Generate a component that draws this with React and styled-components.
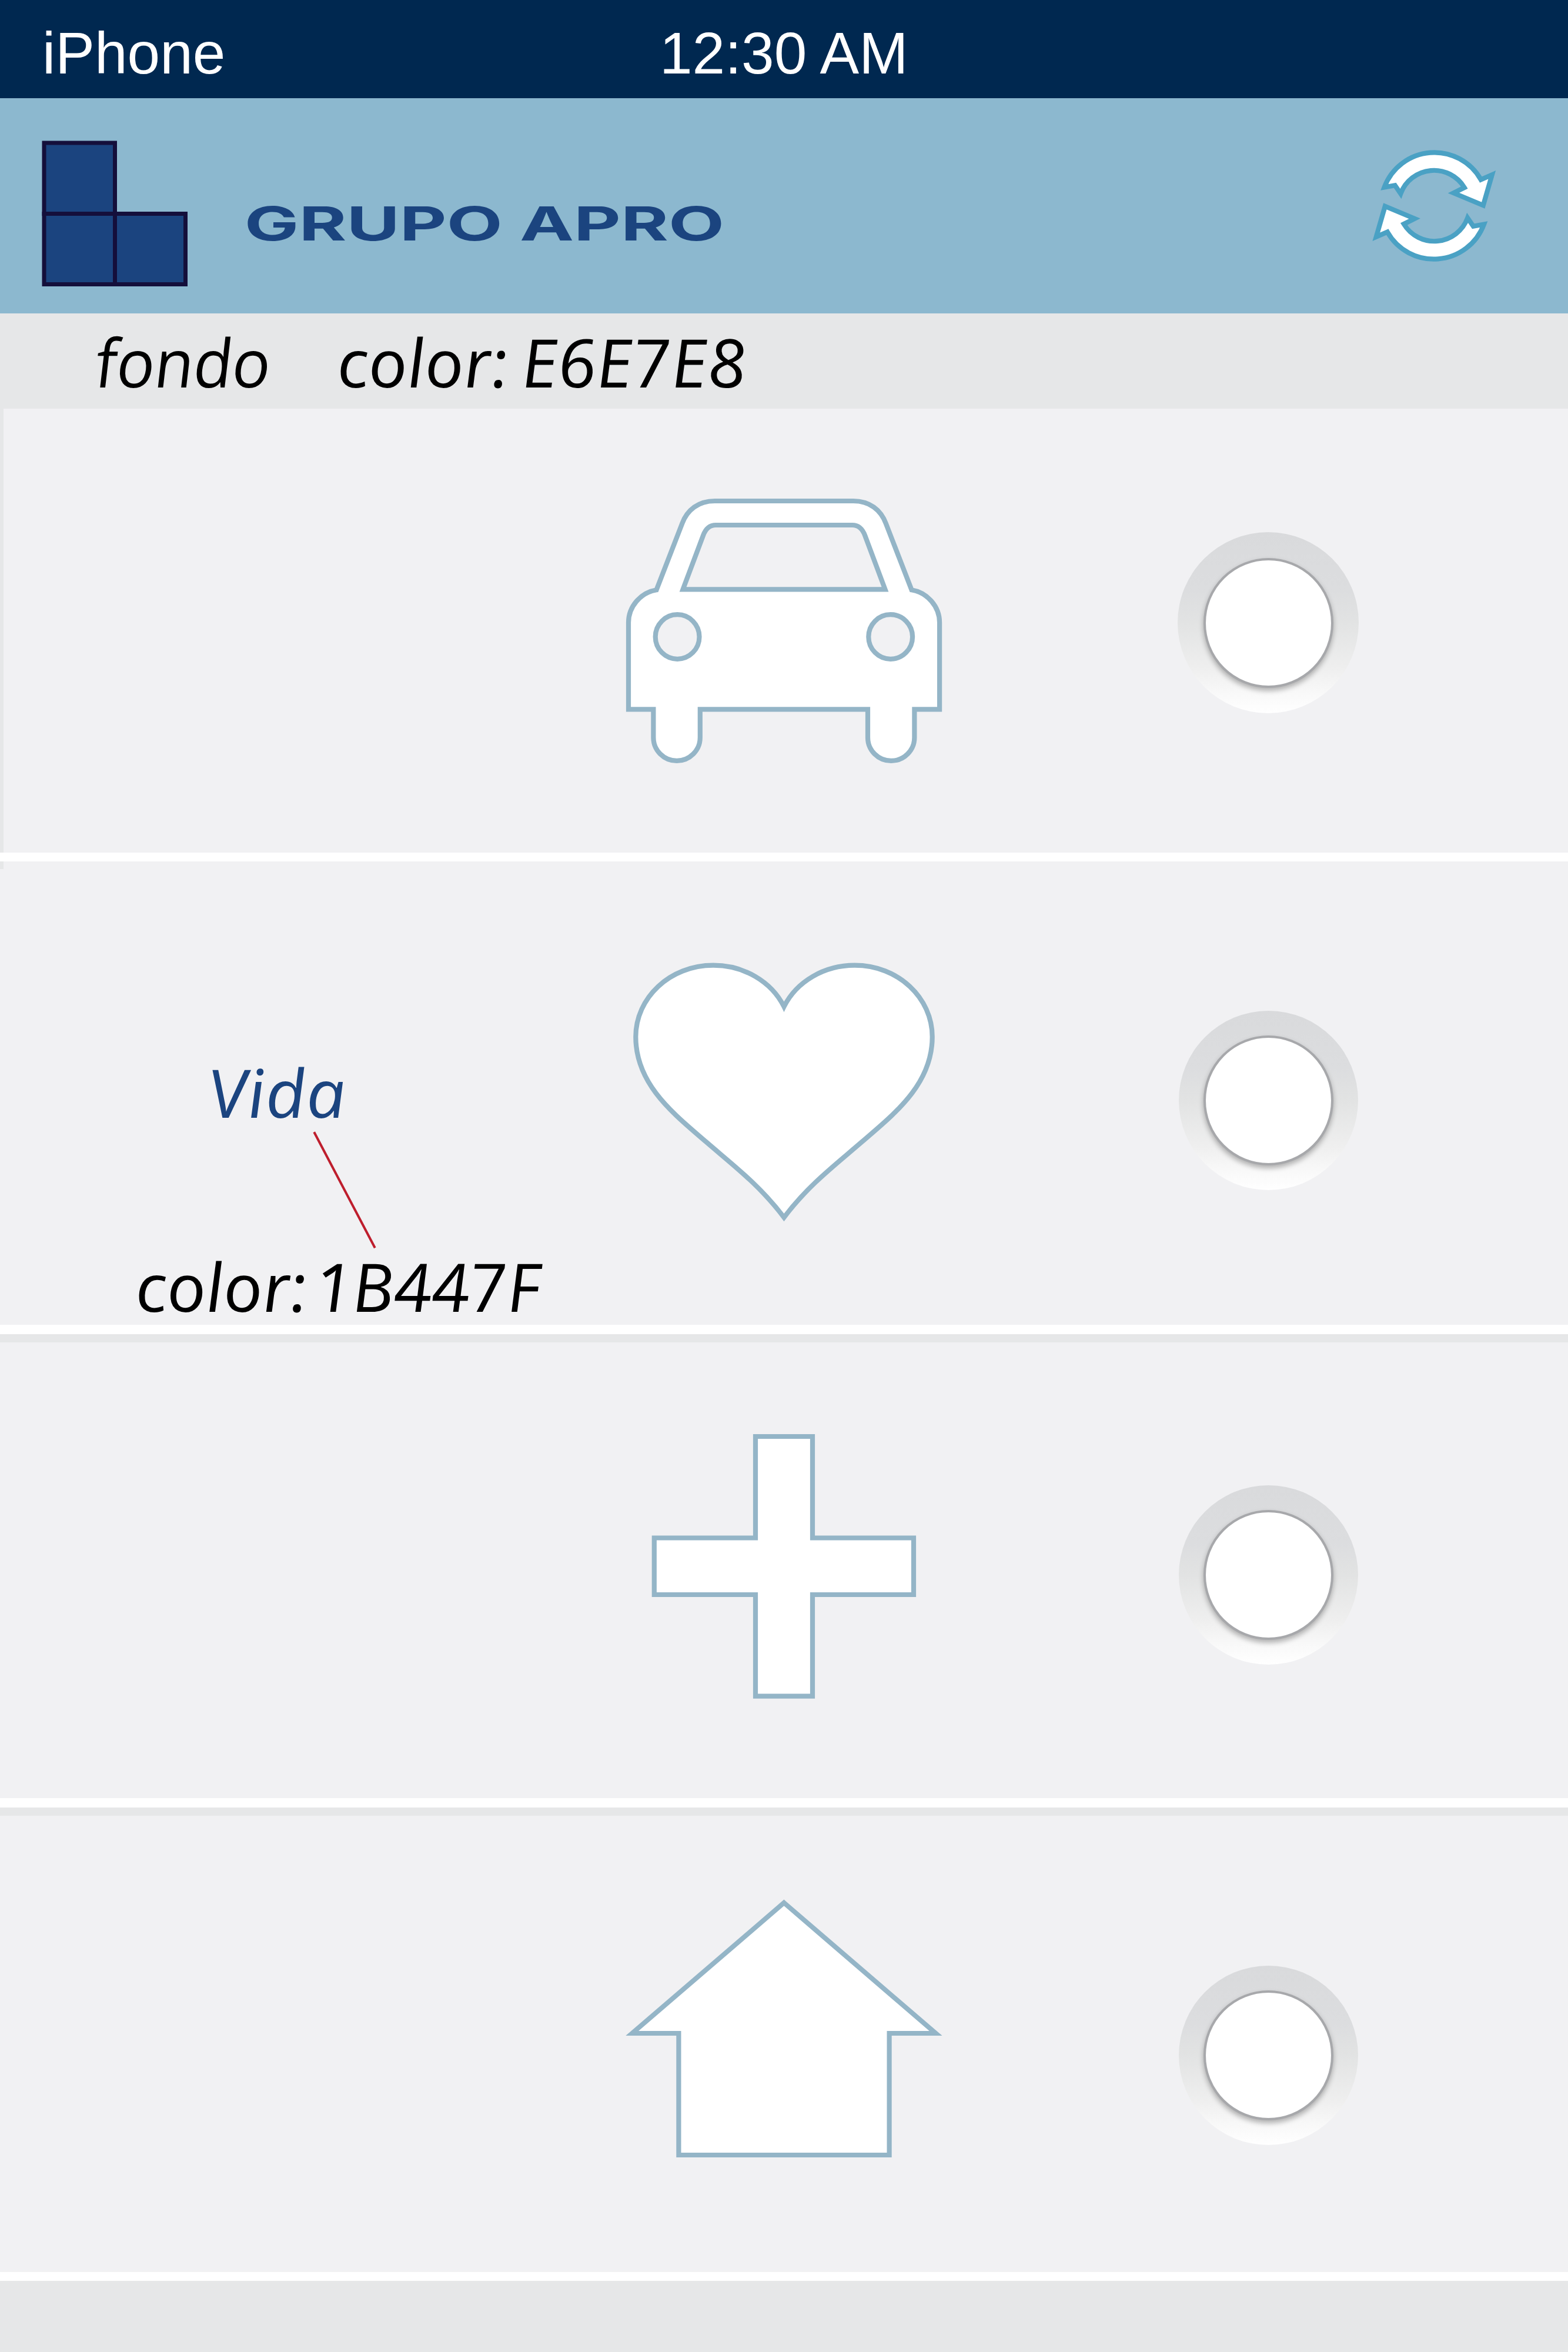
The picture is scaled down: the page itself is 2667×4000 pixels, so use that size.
import React, { useLayoutEffect, useState } from "react";
import styled, { createGlobalStyle } from "styled-components";

const colors = {
  status: "#002850",
  header: "#8cb8cf",
  brand: "#1b447f",
  brandEdge: "#140f3b",
  page: "#e6e7e8",
  row: "#f1f1f3",
  outline: "#94b5c7",
  refresh: "#4aa1c4",
  pointer: "#be1e2d",
};

const GlobalStyle = createGlobalStyle`
  body { margin: 0; background: ${colors.page}; }
  * { box-sizing: border-box; }
  svg { display: block; }
`;

const Screen = styled.div`
  width: 2667px;
  height: 4000px;
  display: flex;
  flex-direction: column;
  overflow: hidden;
  background: ${colors.page};
  font-family: "Liberation Sans", Arial, sans-serif;
`;

const StatusBar = styled.div`
  height: 167px;
  padding: 40px 0 0 72px;
  display: grid;
  grid-template-columns: 1050px 1fr;
  background: ${colors.status};
  color: #fff;
  font-size: 100px;
  line-height: 100px;
`;

const Header = styled.header`
  height: 366px;
  padding: 0 67px 0 71px;
  display: flex;
  align-items: flex-start;
  background: ${colors.header};
`;

const LogoMark = styled.svg`
  margin-top: 72px;
  width: 248px;
  height: 248px;
  fill: ${colors.brand};
  stroke: ${colors.brandEdge};
  stroke-width: 7;
`;

const Wordmark = styled.div`
  margin: 173px auto 0 103px;
  color: ${colors.brand};
`;

const RefreshButton = styled.svg`
  width: 320px;
  height: 300px;
  margin-top: 33px;
  fill: #fff;
  stroke: ${colors.refresh};
  stroke-width: 8.2;
  stroke-miterlimit: 8;
`;

const Notes = styled.div`
  height: 162px;
  padding: 25px 0 0 166px;
  display: flex;
`;

const Gap = styled.span`
  width: ${(p) => p.$size}px;
`;

const Row = styled.section`
  position: relative;
  height: ${(p) => p.$height}px;
  margin-top: ${(p) => p.$above || 0}px;
  border-bottom: ${(p) => p.$rule}px solid #fff;
  display: grid;
  grid-template-columns: 1020px 627px 1020px;
  align-items: start;
  background: ${colors.row};

  &::before {
    content: "";
    position: absolute;
    left: 0;
    top: 0;
    width: 6px;
    height: ${(p) => p.$edge || 0}px;
    background: ${colors.page};
  }
`;

const Caption = styled.div`
  display: flex;
  flex-direction: column;
  padding-top: 335px;
`;

const CaptionLine = styled.div`
  display: flex;
  padding-left: ${(p) => p.$indent}px;
  color: ${(p) => p.$color || "#000"};
`;

const Pointer = styled.svg`
  width: 120px;
  height: 216px;
  margin-left: 526px;
  stroke: ${colors.pointer};
  stroke-width: 4;
`;

const Icon = styled.svg`
  width: ${(p) => p.$width}px;
  height: ${(p) => p.$height}px;
  margin-top: ${(p) => p.$top}px;
  margin-left: ${(p) => p.$left || 0}px;
  fill: #fff;
  fill-rule: evenodd;
  stroke: ${colors.outline};
  stroke-width: 8.2;
`;

const Toggle = styled.div`
  justify-self: center;
  width: ${(p) => p.$size}px;
  height: ${(p) => p.$size}px;
  margin-top: ${(p) => p.$top}px;
  border-radius: 50%;
  display: grid;
  place-items: center;
  background: linear-gradient(
    #d9dadc 0%,
    #dcdddf 32%,
    #e2e3e3 50%,
    #efefef 76%,
    #f8f8f8 88%,
    #ffffff 100%
  );
`;

const Knob = styled.div`
  width: 221px;
  height: 221px;
  border-radius: 50%;
  border: 4px solid #a7a8ab;
  background: #fff;
  box-shadow: 0 5px 9px rgba(0, 0, 0, 0.28);
`;

const InkBox = styled.span`
  display: block;
  width: ${(p) => p.$width}px;
  height: ${(p) => p.$size}px;
`;

const Ink = styled.span`
  display: inline-block;
  white-space: pre;
  font: ${(p) => p.$font};
  line-height: ${(p) => p.$size}px;
  transform-origin: 0 ${(p) => p.$baseline}px;
`;

/* Left and right ink edges of a word drawn with the given slant. */
function inkEdges(text, font, size, skew) {
  const pad = size;
  const canvas = document.createElement("canvas");
  canvas.width = Math.ceil(text.length * size + pad * 2);
  canvas.height = size * 2;
  const ctx = canvas.getContext("2d", { willReadFrequently: true });
  ctx.font = font;
  ctx.setTransform(1, 0, Math.tan((skew * Math.PI) / 180), 1, pad, size * 1.4);
  ctx.fillText(text, 0, 0);
  const { data, width, height } = ctx.getImageData(
    0,
    0,
    canvas.width,
    canvas.height
  );
  let left = width;
  let right = 0;
  for (let y = 0; y < height; y++) {
    for (let x = 0; x < width; x++) {
      if (data[(y * width + x) * 4 + 3] > 100) {
        if (x < left) left = x;
        if (x + 1 > right) right = x + 1;
      }
    }
  }
  return { left: left - pad, right: right - pad };
}

/* Stretches a word horizontally so its visible ink spans the given width. */
function FittedText({ children, width, size, face, skew = 0, baseline = 0 }) {
  const [transform, setTransform] = useState("none");
  const font = face.replace("SIZE", `${size}px`);
  useLayoutEffect(() => {
    const { left, right } = inkEdges(children, font, size, skew);
    setTransform(
      `scaleX(${width / (right - left)}) translateX(${-left}px) skewX(${skew}deg)`
    );
  }, [children, width, font, size, skew]);
  return (
    <InkBox $width={width} $size={size}>
      <Ink $font={font} $size={size} $baseline={baseline} style={{ transform }}>
        {children}
      </Ink>
    </InkBox>
  );
}

const NOTE_ITALIC = 'italic 400 SIZE "Open Sans", "Noto Sans", sans-serif';
const NOTE_UPRIGHT = 'normal 400 SIZE "Open Sans", "Noto Sans", sans-serif';
const BRAND_FACE = '700 SIZE Inter, "Liberation Sans", sans-serif';

const Note = ({ width, upright, children }) => (
  <FittedText
    width={width}
    size={114}
    face={upright ? NOTE_UPRIGHT : NOTE_ITALIC}
    skew={upright ? -7 : 5}
    baseline={101}
  >
    {children}
  </FittedText>
);

const Switch = ({ top, size = 305 }) => (
  <Toggle $top={top} $size={size}>
    <Knob />
  </Toggle>
);

const ARROW =
  "M74.6 118.5 L92.7 115.2 L102.4 129.3 A60.4 60.4 0 0 1 210.8 119 L192.5 128.2 L242.8 149.2 L257.8 97.2 L238.8 105.5 A90.8 90.8 0 0 0 74.6 118.5 Z";

const CarIcon = () => (
  <Icon viewBox="0 0 620 500" $width={620} $height={500} $top={125}>
    <path d="M49 386.3 V238.7 C49 212 69 188 96.5 183.3 L140.4 70 C149 47 168 32 195.7 32 H431.4 C459 32 478 47 486.7 70 L530.6 183.3 C558 188 578.1 212 578.1 238.7 V386.3 H535.4 V434.2 A39.7 39.7 0 0 1 456 434.2 V386.3 H170.8 V434.2 A39.7 39.7 0 0 1 91.4 434.2 V386.3 Z M141.6 182.3 L176 90.7 C179.5 81 186 73 197.5 73 H429.6 C441 73 447.6 81 451.2 90.7 L485.5 182.3 Z M94.7 263 a37.4 37.8 0 1 0 74.8 0 a37.4 37.8 0 1 0 -74.8 0 Z M457.3 263 a37.4 37.8 0 1 0 74.8 0 a37.4 37.8 0 1 0 -74.8 0 Z" />
  </Icon>
);

const HeartIcon = () => (
  <Icon viewBox="0 0 600 500" $width={600} $height={500} $top={135} $left={20}>
    <path d="M293.5 112 C272 69 225 41.7 173.3 41.7 C99 41.7 41.3 97 41.3 163.3 C41.3 245 107 295 160.7 341.7 C203 378.5 252 415 293.5 470.5 C335 415 384 378.5 426.3 341.7 C480 295 545.7 245 545.7 163.3 C545.7 97 488 41.7 413.7 41.7 C362 41.7 315 69 293.5 112 Z" />
  </Icon>
);

const PlusIcon = () => (
  <Icon viewBox="0 0 560 520" $width={560} $height={520} $top={117} $left={40}>
    <path d="M225 43 H322 V215.5 H494 V312 H322 V484.7 H225 V312 H52.8 V215.5 H225 Z" />
  </Icon>
);

const HouseIcon = () => (
  <Icon viewBox="0 0 600 500" $width={600} $height={500} $top={112} $left={20}>
    <path d="M293.5 36 L551.5 258 H472.6 V465 H114.4 V258 H35.3 Z" />
  </Icon>
);

export default function App() {
  return (
    <Screen>
      <GlobalStyle />
      <StatusBar>
        <span>iPhone</span>
        <span>12:30 AM</span>
      </StatusBar>
      <Header>
        <LogoMark viewBox="0 0 248 248">
          <rect x="4" y="4" width="120.5" height="120.5" />
          <rect x="4" y="124.5" width="120.5" height="120" />
          <rect x="124.5" y="124.5" width="120" height="120" />
        </LogoMark>
        <Wordmark>
          <FittedText width={805} size={80} face={BRAND_FACE}>
            GRUPO APRO
          </FittedText>
        </Wordmark>
        <RefreshButton viewBox="0 0 320 300">
          <path d={ARROW} />
          <path d={ARROW} transform="rotate(180 159.3 150)" />
        </RefreshButton>
      </Header>
      <Notes>
        <Note width={288} upright>
          fondo
        </Note>
        <Gap $size={125} />
        <Note width={280}>color:</Note>
        <Gap $size={36} />
        <Note width={369}>E6E7E8</Note>
      </Notes>
      <Row $height={770} $rule={15} $edge={755}>
        <span />
        <CarIcon />
        <Switch top={210} size={308} />
      </Row>
      <Row $height={804} $rule={16} $edge={13}>
        <Caption>
          <CaptionLine $indent={362} $color={colors.brand}>
            <Note width={221}>Vida</Note>
          </CaptionLine>
          <Pointer viewBox="526 1914 120 216">
            <line x1="534.2" y1="1925.3" x2="637.8" y2="2122.3" />
          </Pointer>
          <CaptionLine $indent={236}>
            <Note width={281}>color:</Note>
            <Gap $size={32} />
            <Note width={374}>1B447F</Note>
          </CaptionLine>
        </Caption>
        <HeartIcon />
        <Switch top={254} />
      </Row>
      <Row $above={14} $height={791} $rule={16}>
        <span />
        <PlusIcon />
        <Switch top={243} />
      </Row>
      <Row $above={14} $height={791} $rule={15}>
        <span />
        <HouseIcon />
        <Switch top={255} />
      </Row>
    </Screen>
  );
}
